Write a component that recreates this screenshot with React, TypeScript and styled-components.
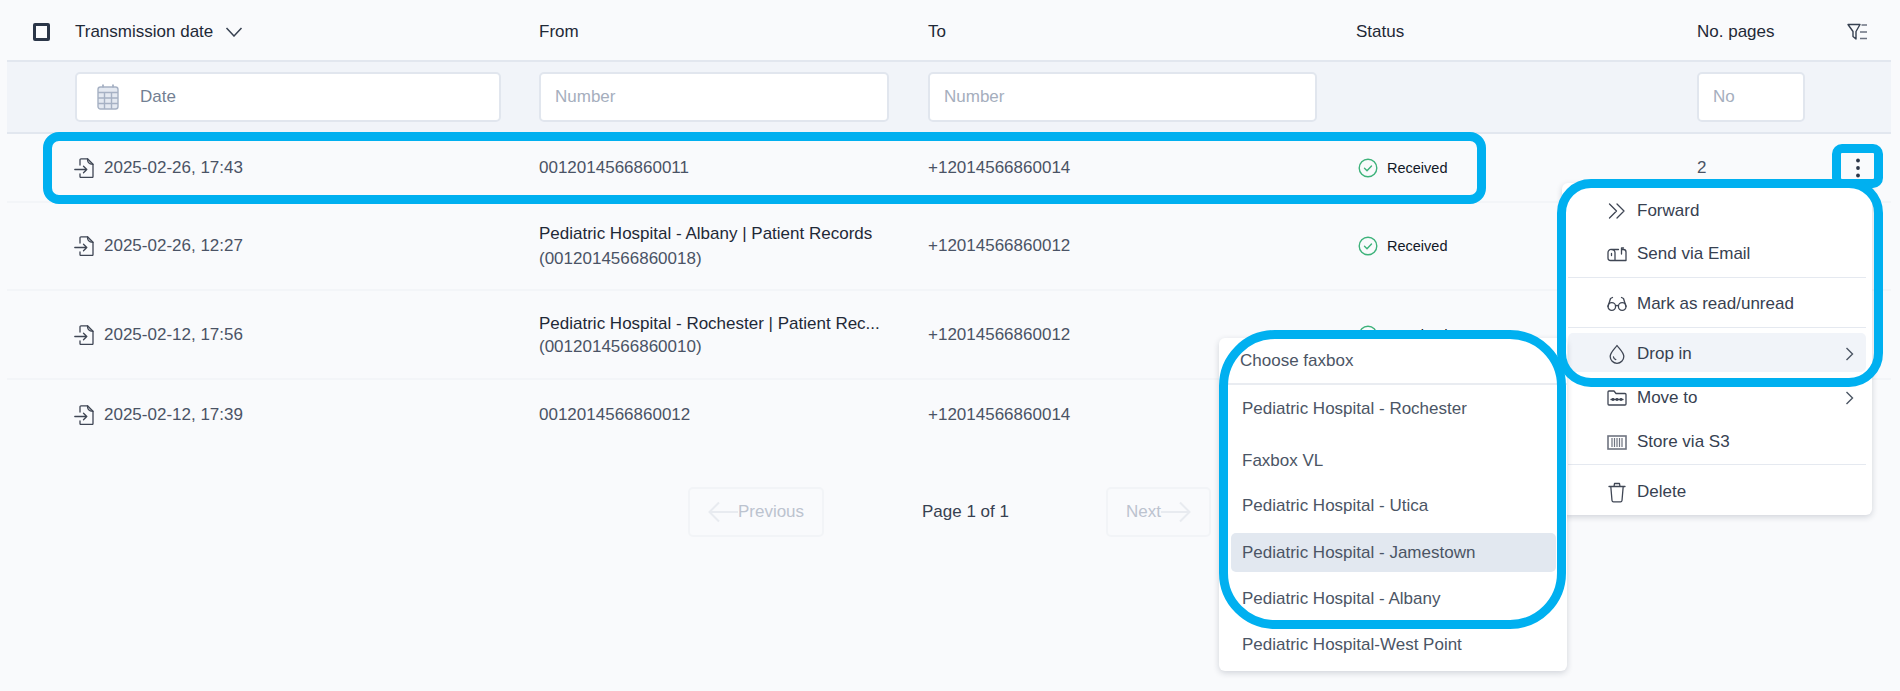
import React from 'react';
import styled, { createGlobalStyle } from 'styled-components';

const Global = createGlobalStyle`
  html, body { margin: 0; padding: 0; background: #f9fafc; }
  body { font-family: "Liberation Sans", Arial, sans-serif; width: 1900px; height: 691px; overflow: hidden; }
`;

const Page = styled.div`
  position: relative;
  width: 1900px;
  height: 691px;
  padding: 0 9px 0 7px;
  box-sizing: border-box;
  overflow: hidden;
`;

const columns = '68px 464px 389px 428px 341px 150px 44px';

const HeaderRow = styled.div`
  display: grid;
  grid-template-columns: ${columns};
  height: 60px;
  align-items: center;
  border-bottom: 2px solid #e2e7ef;
  box-sizing: content-box;
  font-size: 17px;
  color: #1f2937;
`;

const HeaderCell = styled.div`
  display: flex;
  align-items: center;
  gap: 12px;
  padding-top: 3px;
`;

const CheckCell = styled.div`
  display: flex;
  padding: 3px 0 0 26px;
`;

const CheckBox = styled.span`
  width: 11px;
  height: 12px;
  border: 3px solid #2b3648;
  border-radius: 2px;
  background: #fbfcfe;
  display: block;
`;

const FilterRow = styled.div`
  display: grid;
  grid-template-columns: ${columns};
  height: 70px;
  align-items: center;
  background: #f1f4f9;
  border-bottom: 2px solid #e2e7ef;
  box-sizing: content-box;
`;

const InputBox = styled.div<{ $width: number }>`
  width: ${p => p.$width}px;
  height: 50px;
  box-sizing: border-box;
  display: flex;
  align-items: center;
  background: #fff;
  border: 2px solid #e1e6ee;
  border-radius: 5px;
  padding-left: 14px;
  font-size: 17px;
  color: #a5aebd;
`;

const DateBox = styled(InputBox)`
  padding-left: 20px;
  gap: 21px;
  color: #737f93;
`;

const Row = styled.div<{ $height: number; $last?: boolean }>`
  display: grid;
  grid-template-columns: ${columns};
  height: ${p => p.$height}px;
  align-items: center;
  border-bottom: ${p => (p.$last ? 'none' : '2px solid #f3f5f8')};
  box-sizing: border-box;
  font-size: 17px;
  color: #4a5365;
`;

const DateCell = styled.div`
  grid-column: 2;
  display: flex;
  align-items: center;
  gap: 10px;
  margin-left: -1px;
`;

const Stack = styled.div<{ $gap: number; $top: number }>`
  display: flex;
  flex-direction: column;
  gap: ${p => p.$gap}px;
  padding-top: ${p => p.$top}px;
  min-width: 0;
`;

const Name = styled.div`
  color: #1f2937;
  white-space: nowrap;
`;

const Status = styled.div`
  display: flex;
  align-items: center;
  gap: 9px;
  padding-left: 2px;
  font-size: 14.5px;
  color: #111827;
`;

const Kebab = styled.div`
  display: flex;
  justify-content: flex-start;
  margin-left: -3px;
`;

const Pagination = styled.div`
  display: flex;
  align-items: center;
  margin: 37px 0 0 681px;
  height: 50px;
`;

const PageButton = styled.div<{ $width: number }>`
  width: ${p => p.$width}px;
  height: 50px;
  box-sizing: border-box;
  display: flex;
  align-items: center;
  justify-content: center;
  border: 2px solid #f2f4f7;
  border-radius: 5px;
  font-size: 17px;
  color: #bcc3cf;
`;

const PageLabel = styled.div`
  width: 282px;
  padding-left: 98px;
  box-sizing: border-box;
  font-size: 17px;
  color: #374151;
`;

const Menu = styled.div`
  position: absolute;
  left: 1562px;
  top: 183px;
  width: 310px;
  height: 332px;
  box-sizing: border-box;
  padding: 6px;
  background: #fff;
  border-radius: 6px;
  box-shadow: 0 2px 6px rgba(30, 41, 59, 0.18);
  font-size: 17px;
  color: #374151;
`;

const MenuItem = styled.div<{ $active?: boolean; $height: number }>`
  display: flex;
  align-items: center;
  height: ${p => p.$height}px;
  box-sizing: border-box;
  padding: 2px 12px 0 39px;
  gap: 10px;
  border-radius: 5px;
  background: ${p => (p.$active ? '#f1f4f9' : 'transparent')};
`;

const MenuLabel = styled.span`
  flex: 1;
`;

const MenuIcon = styled.span`
  width: 20px;
  height: 20px;
  display: flex;
  align-items: center;
  justify-content: center;
`;

const MenuDivider = styled.div<{ $before: number; $after: number }>`
  height: 1px;
  background: #e5e9f0;
  margin-top: ${p => p.$before}px;
  margin-bottom: ${p => p.$after}px;
`;

const Faxbox = styled.div`
  position: absolute;
  left: 1219px;
  top: 338px;
  width: 348px;
  height: 333px;
  box-sizing: border-box;
  background: #fff;
  border-radius: 6px;
  box-shadow: 0 2px 6px rgba(30, 41, 59, 0.18);
  font-size: 17px;
  color: #4b5565;
`;

const FaxTitle = styled.div`
  height: 47px;
  padding-left: 21px;
  display: flex;
  align-items: center;
  padding-top: 1px;
  box-sizing: border-box;
  border-bottom: 2px solid #e9ecf1;
`;

const FaxList = styled.div`
  padding: 2px 11px 0 12px;
`;

const FaxItem = styled.div<{ $active?: boolean; $height: number; $gap: number }>`
  display: flex;
  align-items: center;
  height: ${p => p.$height}px;
  margin-top: ${p => p.$gap}px;
  padding-left: 11px;
  border-radius: 5px;
  background: ${p => (p.$active ? '#e2e8f0' : 'transparent')};
`;

const Callout = styled.div<{ $x: number; $y: number; $w: number; $h: number; $r: number }>`
  position: absolute;
  left: ${p => p.$x}px;
  top: ${p => p.$y}px;
  width: ${p => p.$w}px;
  height: ${p => p.$h}px;
  box-sizing: border-box;
  border: 9px solid #00b0f0;
  border-radius: ${p => p.$r}px;
  pointer-events: none;
`;

const Svg = styled.svg`
  display: block;
  flex: none;
`;

const NumberCell = styled.div`
  color: #4a5365;
`;

const stroke = { fill: 'none', stroke: '#3f4654', strokeWidth: 1.3, strokeLinecap: 'round' as const, strokeLinejoin: 'round' as const };

const FileIn = () => (
  <Svg width="20" height="20" viewBox="0 0 20 20" {...stroke}>
    <path d="M6 7V1.800A1 1 0 0 1 7 .8h6.500L19 6.300V18.500a1 1 0 0 1-1 1H7a1 1 0 0 1-1-1V16" />
    <path d="M13.500.8c-.2 2.800 1 5.500 5.500 5.500" />
    <path d="M.8 11.500h12M9.500 8.200l3.300 3.300-3.300 3.300" />
  </Svg>
);

const Chevron = () => (
  <Svg width="18" height="10" viewBox="0 0 18 10" fill="none" stroke="#374151" strokeWidth="1.5">
    <path d="M1.500 1 9 9l7.500-8" />
  </Svg>
);

const FilterList = () => (
  <Svg width="21" height="18" viewBox="0 0 21 18" fill="none" stroke="#374151" strokeWidth="1.4" strokeLinejoin="round">
    <path d="M1 1.500h12L9 8.500V16L6 13.500V8.500z" />
    <path d="M14.500 2H20M13 9h7M13 15.500h7" stroke="#6b7280" />
  </Svg>
);

const Calendar = () => (
  <Svg width="22" height="30" viewBox="0 0 22 30" fill="none" stroke="#a6b1c4" strokeWidth="1.4">
    <rect x="1" y="5" width="20" height="22" rx="2.500" fill="#e4e9f1" />
    <path d="M1 10.500h20M1 16h20M1 21.500h20M7.500 10.500V27M14.500 10.500V27" />
    <path d="M6 2.500v3M16 2.500v3" strokeWidth="1.800" />
  </Svg>
);

const Check = () => (
  <Svg width="20" height="20" viewBox="0 0 20 20" fill="none" stroke="#3db27a" strokeWidth="1.400" strokeLinecap="round" strokeLinejoin="round">
    <circle cx="10" cy="10" r="8.800" />
    <path d="m6.500 10.200 2.500 2.500 4.500-4.800" />
  </Svg>
);

const Dots = () => (
  <Svg width="28" height="28" viewBox="0 0 28 28" fill="#2b3648">
    <circle cx="14" cy="6.500" r="1.900" />
    <circle cx="14" cy="14" r="1.900" />
    <circle cx="14" cy="21.500" r="1.900" />
  </Svg>
);

const ArrowLeft = () => (
  <Svg width="30" height="22" viewBox="0 0 30 22" fill="none" stroke="#e8ebf0" strokeWidth="2">
    <path d="M30 11H2M11 1.500 1.500 11l9.500 9.500" />
  </Svg>
);

const ArrowRight = () => (
  <Svg width="30" height="22" viewBox="0 0 30 22" fill="none" stroke="#e8ebf0" strokeWidth="2">
    <path d="M0 11h28M19 1.500l9.500 9.500L19 20.500" />
  </Svg>
);

const Forward = () => (
  <Svg width="18" height="16" viewBox="0 0 18 16" {...stroke}>
    <path d="m1.500 1 7 7-7 7M9 1l7 7-7 7" />
  </Svg>
);

const Mailbox = () => (
  <Svg width="20" height="15" viewBox="0 0 20 15" {...stroke}>
    <path d="M4.500 2.500H11.500M15 2.500h1.500a2.500 2.500 0 0 1 2.500 2.500v8.500H3.500A2.500 2.500 0 0 1 1 11V5.500a3 3 0 0 1 3.500-3 3.200 3.200 0 0 1 3.500 3V13.500" />
    <path d="M14.500 7V1h2M4.500 6.500v2" />
  </Svg>
);

const Glasses = () => (
  <Svg width="20" height="16" viewBox="0 0 20 16" {...stroke}>
    <circle cx="4.800" cy="10.500" r="3.800" />
    <circle cx="15.200" cy="10.500" r="3.800" />
    <path d="M8.500 10c1-.8 2-.8 3 0M1 10.500 3.500 2.500 5.500 1.500M19 10.500 16.500 2.500 14.500 1.500" />
  </Svg>
);

const Drop = () => (
  <Svg width="16" height="20" viewBox="0 0 16 20" {...stroke}>
    <path d="M8 1.500c1.500 2.500 6.800 6.800 6.800 11a6.800 6.800 0 0 1-13.600 0c0-4.200 5.300-8.500 6.800-11z" />
    <path d="M4.500 13c.2 1.300 1 2.200 2.300 2.600" />
  </Svg>
);

const Caret = () => (
  <Svg width="9" height="14" viewBox="0 0 9 14" fill="none" stroke="#4b5563" strokeWidth="1.400">
    <path d="m1.500 1 6 6-6 6" />
  </Svg>
);

const FolderDots = () => (
  <Svg width="20" height="16" viewBox="0 0 20 16" {...stroke}>
    <path d="M1 2a1 1 0 0 1 1-1h5l2 2.500h9a1 1 0 0 1 1 1V14a1 1 0 0 1-1 1H2a1 1 0 0 1-1-1z" />
    <path d="M4 9.500h12" />
    <circle cx="6" cy="9.500" r=".8" />
    <circle cx="10" cy="9.500" r=".8" />
    <circle cx="14" cy="9.500" r=".8" />
  </Svg>
);

const Store = () => (
  <Svg width="20" height="15" viewBox="0 0 20 15" fill="none" stroke="#6f7480" strokeWidth="1.600">
    <rect x="1" y="1" width="18" height="13" />
    <path d="M5 3v9M7.500 3v9M10 3v9M12.500 3v9M15 3v9" strokeWidth="1.200" />
  </Svg>
);

const Trash = () => (
  <Svg width="18" height="21" viewBox="0 0 18 21" {...stroke}>
    <path d="M1 4.500h16M6 4.500 6.500 1.500h5L12 4.500M2.800 4.500 4 18.500a1.500 1.500 0 0 0 1.500 1.300h7a1.500 1.500 0 0 0 1.500-1.300l1.200-14" />
  </Svg>
);

const rows = [
  { h: 69, date: '2025-02-26, 17:43', to: '+12014566860014', from: '0012014566860011', status: true, pages: true },
  { h: 88, date: '2025-02-26, 12:27', to: '+12014566860012', name: 'Pediatric Hospital - Albany | Patient Records', from: '(0012014566860018)', status: true, gap: 5, top: 0 },
  { h: 89, date: '2025-02-12, 17:56', to: '+12014566860012', name: 'Pediatric Hospital - Rochester | Patient Rec...', from: '(0012014566860010)', status: true, gap: 3, top: 2 },
  { h: 70, date: '2025-02-12, 17:39', to: '+12014566860014', from: '0012014566860012' },
];

export default function App() {
  return (
    <Page>
      <Global />
      <HeaderRow>
        <CheckCell><CheckBox /></CheckCell>
        <HeaderCell>Transmission date <Chevron /></HeaderCell>
        <HeaderCell>From</HeaderCell>
        <HeaderCell>To</HeaderCell>
        <HeaderCell>Status</HeaderCell>
        <HeaderCell>No. pages</HeaderCell>
        <HeaderCell><FilterList /></HeaderCell>
      </HeaderRow>
      <FilterRow>
        <span />
        <DateBox $width={426}><Calendar />Date</DateBox>
        <InputBox $width={350}>Number</InputBox>
        <InputBox $width={389}>Number</InputBox>
        <span />
        <InputBox $width={108}>No</InputBox>
        <span />
      </FilterRow>
      {rows.map((r, i) => (
        <Row key={i} $height={r.h} $last={i === rows.length - 1}>
          <DateCell><FileIn />{r.date}</DateCell>
          {r.name ? (
            <Stack $gap={r.gap ?? 5} $top={r.top ?? 0}><Name>{r.name}</Name><div>{r.from}</div></Stack>
          ) : (
            <div>{r.from}</div>
          )}
          <div>{r.to}</div>
          {r.status ? <Status><Check />Received</Status> : <span />}
          {r.pages ? <NumberCell>2</NumberCell> : <span />}
          {r.pages ? <Kebab><Dots /></Kebab> : <span />}
        </Row>
      ))}
      <Pagination>
        <PageButton $width={136}><ArrowLeft />Previous</PageButton>
        <PageLabel>Page 1 of 1</PageLabel>
        <PageButton $width={105}>Next<ArrowRight /></PageButton>
      </Pagination>

      <Menu>
        <MenuItem $height={42}><MenuIcon><Forward /></MenuIcon><MenuLabel>Forward</MenuLabel></MenuItem>
        <MenuItem $height={44}><MenuIcon><Mailbox /></MenuIcon><MenuLabel>Send via Email</MenuLabel></MenuItem>
        <MenuDivider $before={2} $after={0} />
        <MenuItem $height={49}><MenuIcon><Glasses /></MenuIcon><MenuLabel>Mark as read/unread</MenuLabel></MenuItem>
        <MenuDivider $before={0} $after={5} />
        <MenuItem $height={39} $active><MenuIcon><Drop /></MenuIcon><MenuLabel>Drop in</MenuLabel><Caret /></MenuItem>
        <MenuItem $height={50}><MenuIcon><FolderDots /></MenuIcon><MenuLabel>Move to</MenuLabel><Caret /></MenuItem>
        <MenuItem $height={38}><MenuIcon><Store /></MenuIcon><MenuLabel>Store via S3</MenuLabel></MenuItem>
        <MenuDivider $before={4} $after={7} />
        <MenuItem $height={38}><MenuIcon><Trash /></MenuIcon><MenuLabel>Delete</MenuLabel></MenuItem>
      </Menu>

      <Faxbox>
        <FaxTitle>Choose faxbox</FaxTitle>
        <FaxList>
          <FaxItem $height={44} $gap={0}>Pediatric Hospital - Rochester</FaxItem>
          <FaxItem $height={44} $gap={8}>Faxbox VL</FaxItem>
          <FaxItem $height={44} $gap={1}>Pediatric Hospital - Utica</FaxItem>
          <FaxItem $height={39} $gap={5} $active>Pediatric Hospital - Jamestown</FaxItem>
          <FaxItem $height={44} $gap={5}>Pediatric Hospital - Albany</FaxItem>
          <FaxItem $height={44} $gap={2}>Pediatric Hospital-West Point</FaxItem>
        </FaxList>
      </Faxbox>

      <Callout $x={43} $y={132} $w={1443} $h={72} $r={16} />
      <Callout $x={1832} $y={144} $w={51} $h={44} $r={10} />
      <Callout $x={1557} $y={179} $w={326} $h={208} $r={34} />
      <Callout $x={1219} $y={330} $w={347} $h={299} $r={56} />
    </Page>
  );
}
